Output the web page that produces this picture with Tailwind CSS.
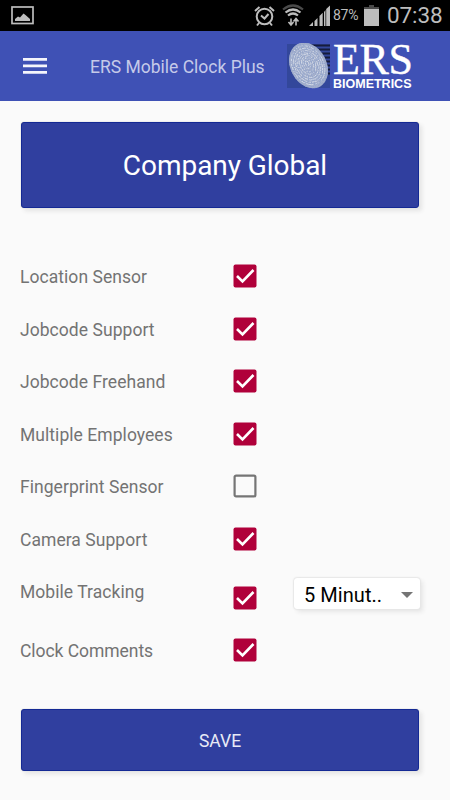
<!DOCTYPE html>
<html lang="en">
<head>
  <meta charset="UTF-8" />
  <meta name="viewport" content="width=device-width, initial-scale=1.0"/>
  <title>ERS Mobile Clock Plus</title>
  <script src="https://cdn.jsdelivr.net/npm/@tailwindcss/browser@4"></script>
</head>
<body class="bg-[#fafafa] font-['Roboto',sans-serif] text-[#737373] w-[450px] h-[800px] overflow-hidden">

  <!-- shared shapes -->
  <svg class="hidden">
    <symbol id="checked" viewBox="0 0 24 24">
      <rect x="0.5" y="0.5" width="23" height="23" rx="2" fill="#b0003a"/>
      <path d="M4 12l5.500 5.500L20.500 6" fill="none" stroke="#fff" stroke-width="2.600"/>
    </symbol>
    <symbol id="unchecked" viewBox="0 0 24 24">
      <rect x="1.6" y="1.6" width="20.8" height="20.8" rx="1.5" fill="none" stroke="#757575" stroke-width="2.2"/>
    </symbol>
  </svg>

  <!-- Status bar -->
  <div class="h-[31px] bg-black flex items-center text-[#bdbdbd]">
    <svg class="ml-[11px] w-[23px] h-[19px]" viewBox="0 0 23 19">
      <rect x="1" y="1" width="21" height="16.5" fill="none" stroke="#bdbdbd" stroke-width="1.7"/>
      <path d="M4 15v-2l3-2.5 2 1 3.5-4 2 1.500 4.500 4v2z" fill="#bdbdbd"/>
    </svg>
    <svg class="ml-[220px] w-[21px] h-[22px]" viewBox="0 0 21 22" fill="none" stroke="#bdbdbd" stroke-width="2">
      <circle cx="10.500" cy="11.500" r="7.800"/>
      <path d="M7 10.500l3.500 3 4-4.500M1 6l4.500-4M20 6l-4.500-4M5 18l-2 2.500M16 18l2 2.500"/>
    </svg>
    <svg class="ml-[7px] w-[22px] h-[23px]" viewBox="0 0 22 23" fill="none" stroke-width="2.200">
      <path d="M1 5.500q10-8 20 0" stroke="#4a4a4a"/>
      <path d="M3.500 8.500q7.500-6 15 0M6 11.500q5-4 10 0" stroke="#bdbdbd"/>
      <path d="M9 14.500v6.500M6.500 18l2.500 3 2.500-3M14 21.500v-6.500M11.500 17.500l2.500-3 2.500 3" stroke="#bdbdbd" stroke-width="1.6"/>
    </svg>
    <svg class="ml-[5px] w-[21px] h-[21px]" viewBox="0 0 21 21" fill="#bdbdbd">
      <path d="M0 21l4-4v4zM5.500 21v-5l3-3v8zM10.500 21v-10l3.200-3.200v13.200zM15 21v-14l1.500-2v16zM17.200 21v-17l3.800-3.500v20.500z"/>
    </svg>
    <span class="ml-[3px] w-[28px] text-[14px] tracking-[-0.3px] whitespace-nowrap">87%</span>
    <svg class="ml-[3px] w-[15px] h-[21px]" viewBox="0 0 15 21">
      <path d="M5 0h5v2h5v3H0V2h5z" fill="#4a4a4a"/>
      <rect y="4" width="15" height="17" fill="#bdbdbd"/>
    </svg>
    <span class="ml-[8px] text-[22.5px] tracking-[-0.1px] whitespace-nowrap">07:38</span>
  </div>

  <!-- App bar -->
  <header class="h-[70px] bg-[#3f51b5] flex items-center">
    <svg class="ml-[23px] w-6 h-[18px]" viewBox="0 0 24 18" fill="#f5f5fb">
      <path d="M0 1h24v2.800H0zM0 7.500h24v2.800H0zM0 14h24v2.800H0z"/>
    </svg>
    <h1 class="ml-[43px] mt-[3px] w-[175px] text-[17.5px] text-[#c5cae9] whitespace-nowrap">ERS Mobile Clock Plus</h1>
    <svg class="ml-[22px] w-[43px] h-[46px]" viewBox="0 0 43 46">
      <defs>
        <clipPath id="finger"><ellipse cx="21.500" cy="22.500" rx="18" ry="24" transform="rotate(-28 21.500 22.500)"/></clipPath>
        <filter id="grain" x="0" y="0" width="1" height="1">
          <feTurbulence type="fractalNoise" baseFrequency="0.7" numOctaves="2" seed="4"/>
          <feColorMatrix values="0 0 0 0 0.3  0 0 0 0 0.38  0 0 0 0 0.6  4 0 0 0 -1.700"/>
        </filter>
      </defs>
      <rect width="43" height="44" y="1" fill="#33479b"/>
      <path d="M24 2.500h19M27 6.500h16M30 10.500h13M32 14.500h11M34 18.500h9M36 22.500h7M38 26.500h5M39 30.500h4" stroke="#161c3c" stroke-width="1.800"/>
      <g clip-path="url(#finger)">
        <rect width="43" height="46" fill="#a4afcb"/>
        <g fill="none" stroke="#d9dfec" stroke-width="0.800" transform="rotate(-28 21.500 22)">
          <ellipse cx="21" cy="20" rx="1.500" ry="3"/>
          <ellipse cx="21" cy="20" rx="3.500" ry="5.500"/>
          <ellipse cx="21" cy="21" rx="5.500" ry="8"/>
          <ellipse cx="21" cy="21" rx="7.500" ry="10.500"/>
          <ellipse cx="21" cy="22" rx="9.500" ry="13"/>
          <ellipse cx="21" cy="22" rx="11.500" ry="15.500"/>
          <ellipse cx="21" cy="22" rx="13.500" ry="18"/>
          <ellipse cx="21" cy="22" rx="15.500" ry="20.500"/>
        </g>
        <rect width="43" height="46" filter="url(#grain)"/>
      </g>
    </svg>
    <div class="ml-[2px] w-[82px] flex flex-col text-white whitespace-nowrap">
      <span class="pl-px font-['Liberation_Serif',serif] text-[44px] leading-[36px] tracking-[-0.3px] [-webkit-text-stroke:0.4px_white]">ERS</span>
      <span class="pl-px font-['Liberation_Sans',sans-serif] font-bold text-[12.5px] leading-[12px]">BIOMETRICS</span>
    </div>
  </header>

  <main class="px-[21px] pt-[21px]">
    <button class="block w-[398px] h-[86px] rounded-[3px] bg-[#303f9f] border border-[#142994] text-white text-[28px] tracking-[-0.05px] shadow-[3px_3px_4px_#e4e4e4,0_0_1px_#999] pl-[10px] pt-[2px]">Company Global</button>

    <!-- Settings -->
    <div class="mt-[42px] -ml-px text-[17.5px] tracking-[0.05px]">
      <div class="flex items-center h-[52.5px]">
        <span class="w-[213px] pt-[2px]">Location Sensor</span>
        <svg class="w-6 h-6"><use href="#checked"/></svg>
      </div>
      <div class="flex items-center h-[52.5px]">
        <span class="w-[213px] pt-[2px]">Jobcode Support</span>
        <svg class="w-6 h-6"><use href="#checked"/></svg>
      </div>
      <div class="flex items-center h-[52.5px]">
        <span class="w-[213px] pt-[2px]">Jobcode Freehand</span>
        <svg class="w-6 h-6"><use href="#checked"/></svg>
      </div>
      <div class="flex items-center h-[52.5px]">
        <span class="w-[213px] pt-[2px]">Multiple Employees</span>
        <svg class="w-6 h-6"><use href="#checked"/></svg>
      </div>
      <div class="flex items-center h-[52.5px]">
        <span class="w-[213px] pt-[2px]">Fingerprint Sensor</span>
        <svg class="w-6 h-6"><use href="#unchecked"/></svg>
      </div>
      <div class="flex items-center h-[52.5px]">
        <span class="w-[213px] pt-[2px]">Camera Support</span>
        <svg class="w-6 h-6"><use href="#checked"/></svg>
      </div>
      <div class="flex items-start h-[58.5px]">
        <span class="w-[213px] pt-[13.5px]">Mobile Tracking</span>
        <svg class="mt-[21px] w-6 h-6"><use href="#checked"/></svg>
        <div class="ml-[37px] mt-[13px] w-[126px] h-[31px] flex items-center justify-between pl-[10px] pr-[7px] pt-[2px] bg-white rounded-[3px] shadow-[3px_3px_4px_#e6e6e6,0_0_2px_#bbb] text-black text-[20px]">
          <span>5 Minut..</span>
          <svg class="w-3 h-[6px]" viewBox="0 0 12 6"><path d="M0 0h12l-6 6z" fill="#757575"/></svg>
        </div>
      </div>
      <div class="flex items-center h-[52.5px]">
        <span class="w-[213px] pt-[2px] tracking-[-0.05px]">Clock Comments</span>
        <svg class="w-6 h-6"><use href="#checked"/></svg>
      </div>
    </div>

    <button class="mt-[32.5px] block w-[398px] h-[62px] rounded-[3px] bg-[#303f9f] border border-[#142994] text-[#e8eaf6] text-[17.5px] shadow-[3px_3px_4px_#e4e4e4,0_0_1px_#999] pt-[3px]">SAVE</button>
  </main>

</body>
</html>
